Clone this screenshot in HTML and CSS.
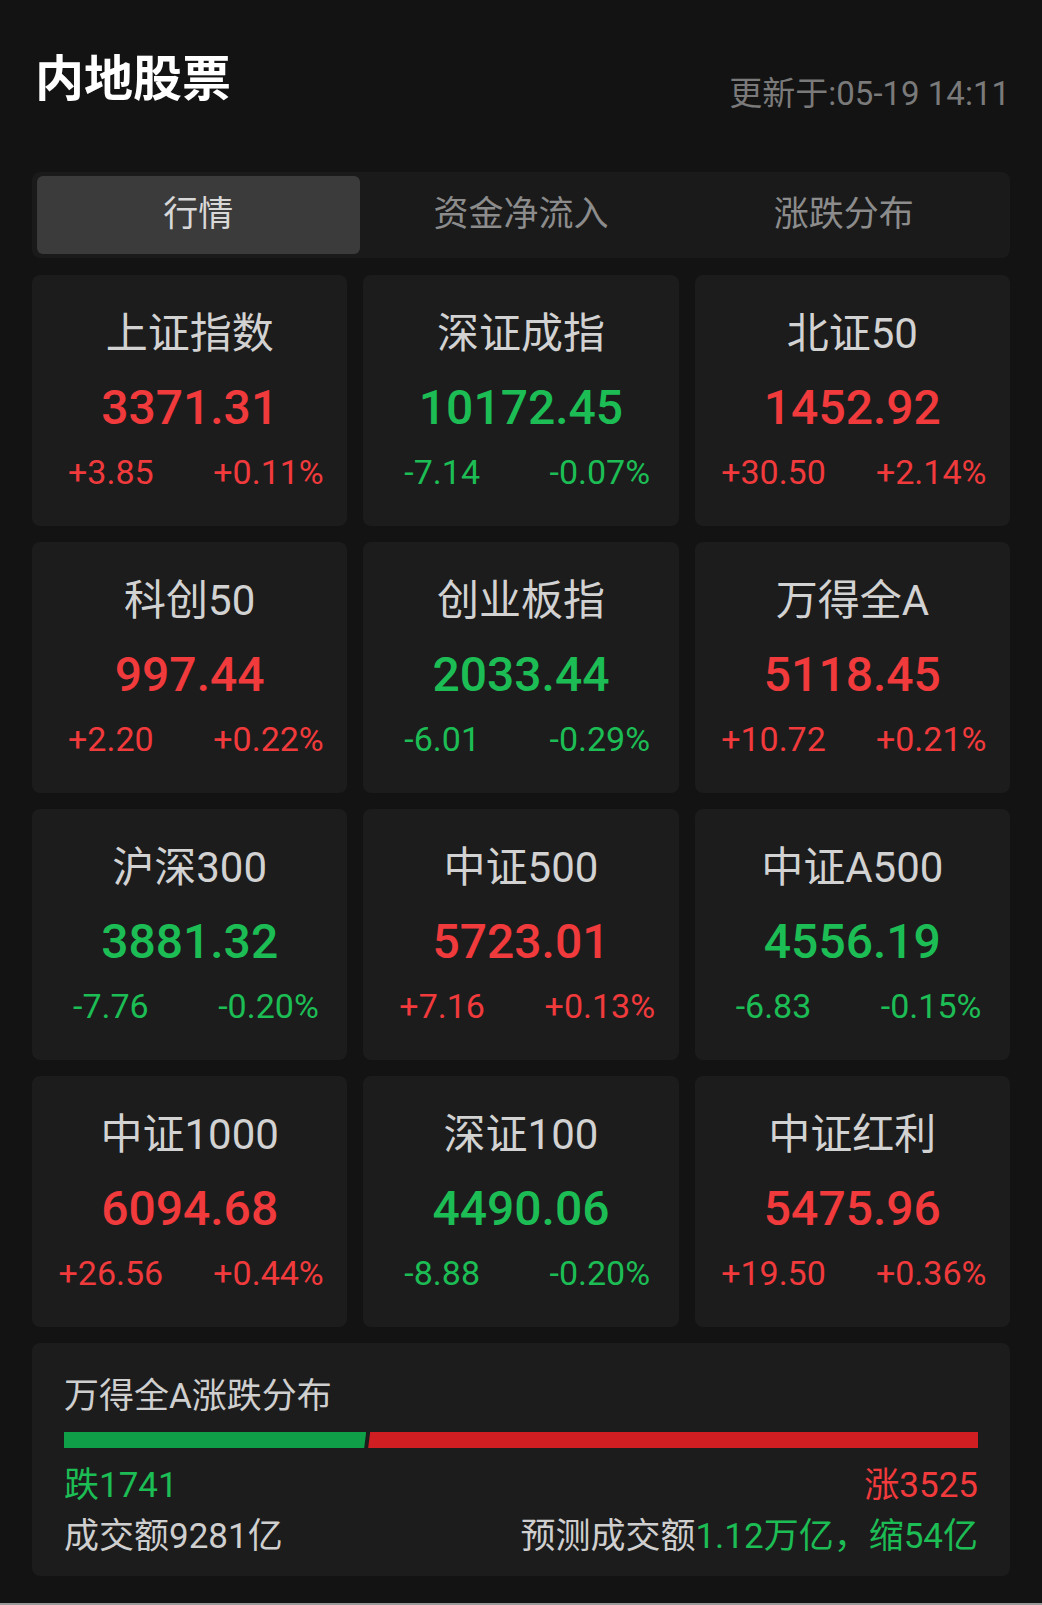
FILE: index.html
```html
<!doctype html>
<html>
<head>
<meta charset=utf8>
<title>内地股票</title>
<meta name="viewport" content="width=device-width, user-scalable=no">
<link rel="stylesheet" href="styles.css">
</head>
<body>
<div id="page">
  <div id="head">
    <h1>内地股票</h1>
    <span id="updated">更新于:05-19 14:11</span>
  </div>
  <div id="tabs">
    <span class="tab on">行情</span>
    <span class="tab">资金净流入</span>
    <span class="tab">涨跌分布</span>
  </div>
  <div id="grid">
    <div class="card up">
      <div class="name">上证指数</div>
      <div class="price">3371.31</div>
      <div class="chg"><span>+3.85</span><span>+0.11%</span></div>
    </div>
    <div class="card down">
      <div class="name">深证成指</div>
      <div class="price">10172.45</div>
      <div class="chg"><span>-7.14</span><span>-0.07%</span></div>
    </div>
    <div class="card up">
      <div class="name">北证50</div>
      <div class="price">1452.92</div>
      <div class="chg"><span>+30.50</span><span>+2.14%</span></div>
    </div>
    <div class="card up">
      <div class="name">科创50</div>
      <div class="price">997.44</div>
      <div class="chg"><span>+2.20</span><span>+0.22%</span></div>
    </div>
    <div class="card down">
      <div class="name">创业板指</div>
      <div class="price">2033.44</div>
      <div class="chg"><span>-6.01</span><span>-0.29%</span></div>
    </div>
    <div class="card up">
      <div class="name">万得全A</div>
      <div class="price">5118.45</div>
      <div class="chg"><span>+10.72</span><span>+0.21%</span></div>
    </div>
    <div class="card down">
      <div class="name">沪深300</div>
      <div class="price">3881.32</div>
      <div class="chg"><span>-7.76</span><span>-0.20%</span></div>
    </div>
    <div class="card up">
      <div class="name">中证500</div>
      <div class="price">5723.01</div>
      <div class="chg"><span>+7.16</span><span>+0.13%</span></div>
    </div>
    <div class="card down">
      <div class="name">中证A500</div>
      <div class="price">4556.19</div>
      <div class="chg"><span>-6.83</span><span>-0.15%</span></div>
    </div>
    <div class="card up">
      <div class="name">中证1000</div>
      <div class="price">6094.68</div>
      <div class="chg"><span>+26.56</span><span>+0.44%</span></div>
    </div>
    <div class="card down">
      <div class="name">深证100</div>
      <div class="price">4490.06</div>
      <div class="chg"><span>-8.88</span><span>-0.20%</span></div>
    </div>
    <div class="card up">
      <div class="name">中证红利</div>
      <div class="price">5475.96</div>
      <div class="chg"><span>+19.50</span><span>+0.36%</span></div>
    </div>
  </div>
  <div id="dist">
    <div class="dtitle">万得全A涨跌分布</div>
    <div class="bar">
      <div class="fall" style="width:33.06%"></div>
      <div class="rise"></div>
    </div>
    <div class="row first">
      <span class="down">跌1741</span>
      <span class="up">涨3525</span>
    </div>
    <div class="row">
      <span>成交额9281亿</span>
      <span>预测成交额<span class="down">1.12万亿，缩54亿</span></span>
    </div>
  </div>
</div>
<div id="edge"></div>
</body>
</html>
```

FILE: styles.css
```css
body {
    margin: 0;
    background: #131313;
    font-family: Roboto, "Noto Sans CJK SC", sans-serif;
}
#page {
    padding: 0 32px;
    height: 1603px;
    box-sizing: border-box;
}
#edge {
    height: 2px;
    background: #9a9a9a;
}

#head {
    display: flex;
    justify-content: space-between;
    align-items: flex-end;
    padding-top: 50px;
}
h1 {
    margin: 0;
    padding-left: 3px;
    font-size: 49px;
    line-height: 60px;
    font-weight: 700;
    color: #fff;
}
#updated {
    margin-bottom: -3px;
    font-size: 33px;
    line-height: 38px;
    color: #7a7a7a;
}

#tabs {
    display: flex;
    margin-top: 62px;
    padding: 4px 5px;
    background: #1a1a1a;
    border-radius: 8px;
}
.tab {
    flex: 1;
    height: 78px;
    line-height: 78px;
    text-align: center;
    font-size: 35px;
    color: #8c8c8c;
    border-radius: 6px;
}
.tab.on {
    background: #3b3b3b;
    color: #d8d8d8;
}

#grid {
    display: grid;
    grid-template-columns: repeat(3, 1fr);
    gap: 16px;
    margin-top: 17px;
}
.card {
    height: 251px;
    box-sizing: border-box;
    padding-top: 34px;
    background: #1c1c1c;
    border-radius: 8px;
    text-align: center;
}
.card .name {
    font-size: 42px;
    line-height: 50px;
    color: #d2d2d2;
}
.card .price {
    margin-top: 18px;
    font-size: 48px;
    line-height: 62px;
    font-weight: 500;
}
.card .chg {
    display: flex;
    margin-top: 11px;
    font-size: 34px;
    line-height: 44px;
}
.card .chg span {
    flex: 1;
}

.up { color: #f03a3c; }
.down { color: #1dbd55; }

#dist {
    margin-top: 16px;
    height: 233px;
    box-sizing: border-box;
    padding: 33px 32px 0;
    background: #1c1c1c;
    border-radius: 8px;
    font-size: 35px;
    color: #cfcfcf;
}
.dtitle {
    line-height: 42px;
}
.bar {
    display: flex;
    height: 16px;
    margin-top: 14px;
}
.bar .fall {
    background: #0f9f48;
    clip-path: polygon(0 0, 100% 0, calc(100% - 2px) 100%, 0 100%);
}
.bar .rise {
    flex: 1;
    margin-left: 2px;
    background: #d01e22;
    clip-path: polygon(2px 0, 100% 0, 100% 100%, 0 100%);
}
.row {
    display: flex;
    justify-content: space-between;
    margin-top: 7px;
    line-height: 44px;
}
.row.first {
    margin-top: 16px;
}
```
